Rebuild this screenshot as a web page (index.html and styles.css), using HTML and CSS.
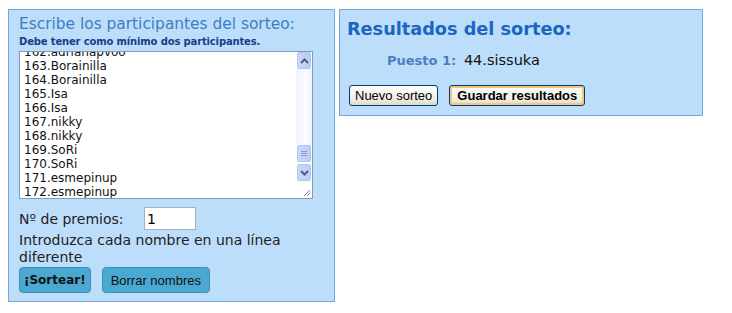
FILE: index.html
```html
<!DOCTYPE html>
<html lang="es">
<head>
  <meta charset="UTF-8" />
  <title>Sorteo</title>
  <link rel="stylesheet" href="styles.css">
</head>
<body>

<div class="wrap">
  <div id="panel-left" class="panel">
    <h3>Escribe los participantes del sorteo:</h3>
    <div class="hint">Debe tener como mínimo dos participantes.</div>

    <div class="names">
      <div class="names-text">
        <div class="names-inner">
          <div>162.adrianapvoo</div>
          <div>163.Borainilla</div>
          <div>164.Borainilla</div>
          <div>165.Isa</div>
          <div>166.Isa</div>
          <div>167.nikky</div>
          <div>168.nikky</div>
          <div>169.SoRi</div>
          <div>170.SoRi</div>
          <div>171.esmepinup</div>
          <div>172.esmepinup</div>
        </div>
      </div>
      <div class="scroll">
        <div class="sb-btn"><svg width="9" height="6" viewBox="0 0 9 6"><path d="M1 5 L4.5 1.5 L8 5" fill="none" stroke="#4d6185" stroke-width="2"/></svg></div>
        <div class="sb-track"></div>
        <div class="sb-btn sb-thumb"><svg width="8" height="7" viewBox="0 0 8 7"><path d="M1 1.5h6M1 3.5h6M1 5.5h6" stroke="#8a9ec8" stroke-width="1"/></svg></div>
        <div class="sb-btn"><svg width="9" height="6" viewBox="0 0 9 6"><path d="M1 1 L4.5 4.5 L8 1" fill="none" stroke="#4d6185" stroke-width="2"/></svg></div>
        <div class="sb-corner"><svg width="10" height="10" viewBox="0 0 10 10"><path d="M9 3 L3 9 M9 6 L6 9" stroke="#888" stroke-width="1"/></svg></div>
      </div>
    </div>

    <div class="prizes">
      <label for="numPremios">Nº de premios:</label>
      <input id="numPremios" value="1" />
    </div>
    <p class="note">Introduzca cada nombre en una línea diferente</p>

    <div class="actions">
      <button class="btn-blue bold">¡Sortear!</button>
      <button class="btn-blue">Borrar nombres</button>
    </div>
  </div>

  <div id="panel-right" class="panel">
    <h2>Resultados del sorteo:</h2>
    <p class="result"><span class="pos">Puesto 1:</span> <span class="winner">44.sissuka</span></p>
    <div class="actions-xp">
      <button class="btn-xp">Nuevo sorteo</button>
      <button class="btn-xp btn-save">Guardar resultados</button>
    </div>
  </div>
</div>

</body>
</html>
```

FILE: styles.css
```css
body {
  margin: 9px 8px 8px;
  font-family: "DejaVu Sans", Verdana, sans-serif;
  background: #fff;
  color: #111;
}
.wrap {
  display: flex;
  align-items: flex-start;
  gap: 4px;
}
.panel {
  background: #bddefb;
  border: 1px solid #76a6db;
}
#panel-left {
  width: 305px;
  padding: 5px 10px 8px 10px;
}
#panel-right {
  width: 348px;
  padding: 8px 7px 9px 7px;
}
#panel-left h3 {
  margin: 0;
  font-size: 15.4px;
  font-weight: normal;
  color: #3f7cc0;
  line-height: 19px;
}
.hint {
  font-size: 10px;
  font-weight: bold;
  color: #173d8a;
  line-height: 14px;
  letter-spacing: -0.15px;
  margin-top: 1px;
}

.names {
  display: flex;
  width: 292px;
  height: 146px;
  border: 1px solid #7f9db9;
  background: #fff;
  margin-top: 2px;
}
.names-text {
  flex: 1;
  overflow: hidden;
  padding-left: 4px;
}
.names-inner {
  margin-top: -7px;
  font-size: 12px;
  line-height: 14px;
  color: #111;
}
.scroll {
  width: 16px;
  display: flex;
  flex-direction: column;
}
.sb-btn {
  height: 15px;
  margin: 0 1px;
  background: linear-gradient(90deg, #c9d8fc, #bccdf6);
  border: 1px solid #b3c4ef;
  border-radius: 2px;
  display: flex;
  justify-content: center;
  align-items: center;
}
.sb-track {
  flex: 1;
  background: linear-gradient(90deg, #eef3fd, #fbfcff 60%, #eef3fd);
}
.sb-thumb {
  margin-bottom: 2px;
}
.sb-corner {
  height: 16px;
  background: #fff;
  display: flex;
  justify-content: flex-end;
  align-items: flex-end;
  padding: 0 1px 1px 0;
}

.prizes {
  display: flex;
  align-items: center;
  margin-top: 8px;
  font-size: 14px;
  color: #222;
}
.prizes label {
  width: 125px;
}
.prizes input {
  width: 46px;
  height: 21px;
  border: 1px solid #a8b0b8;
  font-family: "DejaVu Sans", Verdana, sans-serif;
  font-size: 14px;
  padding: 0 2px;
}
.note {
  margin: 2px 0 0;
  font-size: 14px;
  line-height: 17px;
  color: #222;
}
.actions {
  display: flex;
  gap: 11px;
  margin-top: 1px;
}
.btn-blue {
  height: 26px;
  padding: 0 8px;
  background: #4ba9d1;
  border: 1px solid #3a8fc0;
  border-radius: 4px;
  font-family: "Liberation Sans", Arial, sans-serif;
  font-size: 13px;
  color: #111;
}
.btn-blue.bold {
  padding: 0 4px;
  font-weight: bold;
  font-family: "DejaVu Sans", Verdana, sans-serif;
  font-size: 12px;
}

#panel-right h2 {
  margin: 0;
  font-size: 17.7px;
  font-weight: bold;
  color: #1a66c0;
  line-height: 22px;
}
.result {
  margin: 10px 0 0 40px;
  font-size: 14.5px;
  line-height: 20px;
}
.pos {
  color: #4a7fc0;
  font-weight: bold;
  font-size: 13px;
}
.winner {
  margin-left: 3px;
}
.actions-xp {
  display: flex;
  gap: 11px;
  margin-top: 14px;
  padding-left: 2px;
}
.btn-xp {
  height: 21px;
  padding: 0 5px;
  background: linear-gradient(#fdfdfb, #f1efe4 70%, #dcd8c6);
  border: 1px solid #003c74;
  border-radius: 3px;
  font-family: "Liberation Sans", Arial, sans-serif;
  font-size: 13px;
  color: #000;
}
.btn-save {
  padding: 0 7px;
  font-weight: bold;
  box-shadow: inset 0 0 0 2px #f5c67a;
}
```
